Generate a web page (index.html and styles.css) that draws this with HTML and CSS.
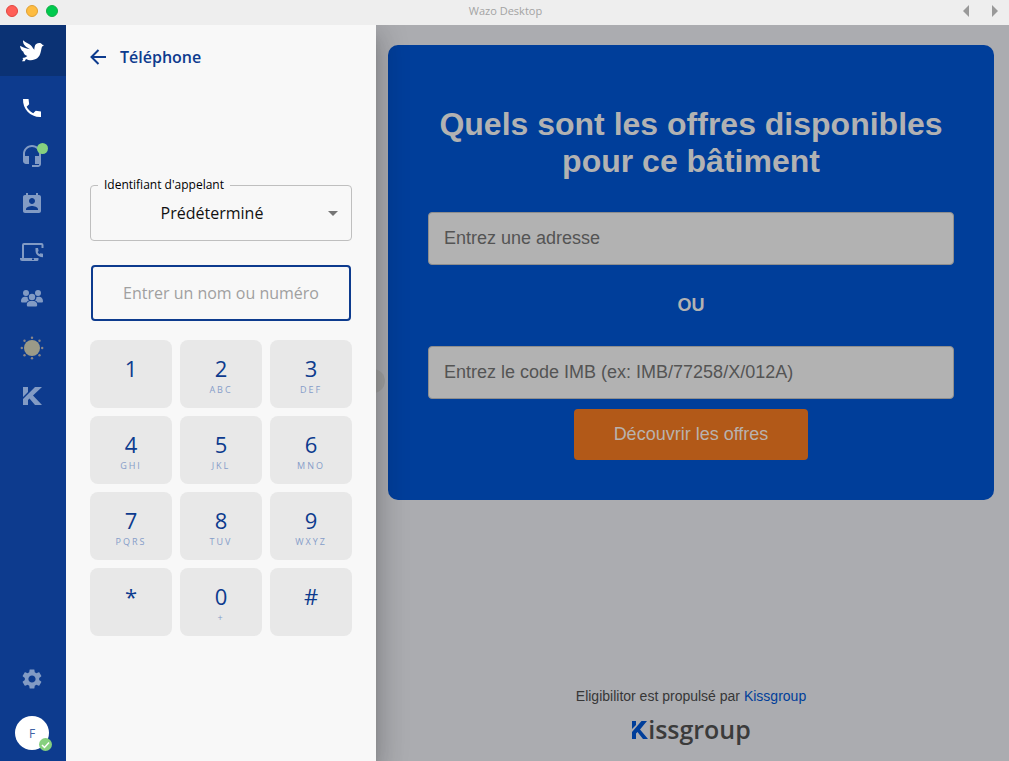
FILE: index.html
```html
<!DOCTYPE html>
<html lang="fr">
<head>
<meta charset="utf-8">
<meta name="viewport" content="width=device-width, initial-scale=1">
<title>Wazo Desktop</title>
<link rel="stylesheet" href="styles.css">
</head>
<body>
<div class="window">
  <header class="titlebar">
    <div class="lights">
      <button class="light light-close" aria-label="Fermer"></button>
      <button class="light light-min" aria-label="Réduire"></button>
      <button class="light light-max" aria-label="Agrandir"></button>
    </div>
    <div class="window-title">Wazo Desktop</div>
    <div class="history">
      <button class="history-btn" aria-label="Précédent"><svg width="8" height="14" viewBox="0 0 8 14"><path d="M7 1v12L1 7z" fill="#999"/></svg></button>
      <button class="history-btn" aria-label="Suivant"><svg width="8" height="14" viewBox="0 0 8 14"><path d="M1 1v12l6-6z" fill="#999"/></svg></button>
    </div>
  </header>
  <div class="body">
    <nav class="sidebar" aria-label="Navigation">
      <a class="brand" href="#" aria-label="Wazo">
        <svg width="24" height="22" viewBox="60 119 72 66" fill="#fff"><path d="M69 120C79 129 93 131 99 144L103 148C103 145 103 142 104 139C105 132 111 128 118 128C122 128 125 130 127 133L132 134L126 139C124 144 124 149 122 156C118 174 104 182 85 179L78 176L74 183L66 183L70 176L67 173C73 173 78 171 82 167C74 164 71 159 70 154C64 150 61 144 60 136C70 142 80 145 91 147C78 141 68 133 69 120Z"/></svg>
      </a>
      <div class="nav-list">
        <a class="nav-item active" href="#" aria-label="Téléphone"><svg width="24" height="24" viewBox="0 0 24 24"><path d="M21 15.460l-5.270-.610-2.520 2.520c-2.830-1.440-5.150-3.750-6.590-6.590l2.530-2.530L8.540 3H3.030C2.450 13.180 10.820 21.550 21 20.970v-5.510z"/></svg></a>
        <a class="nav-item" href="#" aria-label="Agent"><svg width="24" height="24" viewBox="0 0 24 24"><path d="M12 1c-4.97 0-9 4.03-9 9v7c0 1.66 1.34 3 3 3h3v-8H5v-2c0-3.87 3.13-7 7-7s7 3.13 7 7v2h-4v8h4v1h-7v2h6c1.66 0 3-1.34 3-3V10c0-4.970-4.030-9-9-9z"/></svg><span class="dot"></span></a>
        <a class="nav-item" href="#" aria-label="Contacts"><svg width="24" height="24" viewBox="0 0 24 24"><path d="M19 3h-1V1h-2v2H8V1H6v2H5c-1.110 0-2 .9-2 2v14c0 1.100.890 2 2 2h14c1.100 0 2-.9 2-2V5c0-1.100-.9-2-2-2zm-7 3c1.660 0 3 1.340 3 3s-1.340 3-3 3-3-1.340-3-3 1.340-3 3-3zm6 12H6v-1c0-2 4-3.100 6-3.100s6 1.100 6 3.100v1z"/></svg></a>
        <a class="nav-item" href="#" aria-label="Postes"><svg width="24" height="20" viewBox="0 0 24 20"><path d="M3 16V3Q3 2 4 2H21.500Q22.500 2 22.500 3V6" fill="none" stroke="#829bc4" stroke-width="2"/><path d="M0 16H18.500V17.500Q18.500 19 17 19H2Q0 19 0 17Z"/><path d="M15.500 6v2.500c0 4 3 6.700 7.500 6.700v-3.400l-2.500-.6-.9.9c-1-.5-1.500-1.200-1.900-2.200l.9-.9L18 6z"/><path d="M12 16.500h2v1.500h-2z" fill="#0d3b8e"/></svg></a>
        <a class="nav-item" href="#" aria-label="Groupes"><svg width="24" height="24" viewBox="0 0 24 24"><circle cx="6" cy="5" r="3"/><circle cx="18" cy="5" r="3"/><circle cx="12" cy="9" r="3.200"/><path d="M1 13.500C1 10 3 8.700 5.500 8.700L7.500 9Q7.500 11 9 12.500Q7 13 6.500 14.500H2Q1 14.500 1 13.500ZM23 13.500C23 10 21 8.700 18.500 8.700L16.500 9Q16.500 11 15 12.500Q17 13 17.500 14.500H22Q23 14.500 23 13.500ZM6.800 17C6.800 14 9 13 10.500 13H13.500C15 13 17.200 14 17.200 17Q17.200 18.500 16 18.500H8Q6.800 18.500 6.800 17Z"/></svg></a>
        <a class="nav-item" href="#" aria-label="Météo"><svg width="24" height="24" viewBox="0 0 24 24"><circle cx="12" cy="12" r="8" fill="#9b9a88"/><g fill="#8b8688"><circle cx="12" cy="1.800" r="1.200"/><circle cx="12" cy="22.200" r="1.200"/><circle cx="1.800" cy="12" r="1.200"/><circle cx="22.200" cy="12" r="1.200"/><circle cx="4.500" cy="4.800" r="1.200"/><circle cx="19.500" cy="4.800" r="1.200"/><circle cx="4.500" cy="19.200" r="1.200"/><circle cx="19.500" cy="19.200" r="1.200"/></g></svg></a>
        <a class="nav-item" href="#" aria-label="Kissgroup"><svg width="20" height="20" viewBox="0 0 20 20"><path d="M1 1H6V6L1 11ZM1 19V13L13 1H20L11 9.500L20 19H13L7.500 12.500L6 14V19Z"/></svg></a>
      </div>
      <a class="nav-item" href="#" aria-label="Paramètres"><svg width="24" height="24" viewBox="0 0 24 24"><path d="M19.140 12.940c.04-.3.060-.610.060-.940 0-.320-.020-.640-.070-.940l2.030-1.580c.180-.140.230-.410.120-.610l-1.920-3.320c-.120-.220-.370-.290-.590-.220l-2.390.960c-.5-.380-1.030-.7-1.620-.940l-.360-2.540c-.040-.240-.240-.410-.480-.410h-3.840c-.240 0-.430.170-.470.410l-.360 2.540c-.590.240-1.130.570-1.620.940l-2.390-.960c-.220-.080-.470 0-.590.220L2.740 8.870c-.120.210-.080.470.120.610l2.030 1.580c-.050.3-.090.630-.090.940s.020.640.070.940l-2.030 1.580c-.180.140-.230.410-.120.610l1.920 3.320c.120.220.370.290.590.220l2.390-.960c.5.380 1.030.7 1.620.940l.360 2.540c.050.240.240.410.480.410h3.840c.240 0 .440-.170.470-.410l.360-2.540c.590-.240 1.130-.560 1.620-.940l2.390.960c.220.080.470 0 .590-.220l1.920-3.320c.120-.220.070-.470-.120-.610l-2.010-1.580zM12 15.600c-1.980 0-3.600-1.620-3.600-3.600s1.620-3.600 3.600-3.600 3.600 1.620 3.600 3.600-1.620 3.600-3.600 3.600z"/></svg></a>
      <button class="avatar" aria-label="Profil">F<span class="status"><svg width="13" height="13" viewBox="0 0 13 13"><path d="M3 7l2.500 2.500L10 4.500" fill="none" stroke="#fff" stroke-width="1.500"/></svg></span></button>
    </nav>

    <section class="panel">
      <div class="panel-head">
        <button class="back" aria-label="Retour"><svg width="16" height="16" viewBox="0 0 16 16"><path d="M16 8H1.500M8.500 1L1.500 8l7 7" fill="none" stroke="#0d3b8e" stroke-width="2"/></svg></button>
        <h2 class="panel-title">Téléphone</h2>
      </div>
      <fieldset class="caller">
        <legend class="caller-legend"><label for="caller">Identifiant d'appelant</label></legend>
        <select class="caller-select" id="caller"><option>Prédéterminé</option></select>
        <svg class="caret" width="10" height="5" viewBox="0 0 10 5"><path d="M0 0h10L5 5z" fill="#757575"/></svg>
      </fieldset>
      <input class="number" type="text" aria-label="Entrer un nom ou numéro" placeholder="Entrer un nom ou numéro">
      <div class="keypad">
        <button class="key"><span class="digit">1</span></button>
        <button class="key"><span class="digit">2</span><span class="letters">ABC</span></button>
        <button class="key"><span class="digit">3</span><span class="letters">DEF</span></button>
        <button class="key"><span class="digit">4</span><span class="letters">GHI</span></button>
        <button class="key"><span class="digit">5</span><span class="letters">JKL</span></button>
        <button class="key"><span class="digit">6</span><span class="letters">MNO</span></button>
        <button class="key"><span class="digit">7</span><span class="letters">PQRS</span></button>
        <button class="key"><span class="digit">8</span><span class="letters">TUV</span></button>
        <button class="key"><span class="digit">9</span><span class="letters">WXYZ</span></button>
        <button class="key"><span class="digit">*</span></button>
        <button class="key"><span class="digit">0</span><span class="letters">+</span></button>
        <button class="key"><span class="digit">#</span></button>
      </div>
    </section>

    <main class="content">
      <span class="handle"></span>
      <form class="card">
        <h1 class="card-title">Quels sont les offres disponibles pour ce bâtiment</h1>
        <input class="field" type="text" aria-label="Entrez une adresse" placeholder="Entrez une adresse">
        <p class="or">OU</p>
        <input class="field" type="text" aria-label="Entrez le code IMB" placeholder="Entrez le code IMB (ex: IMB/77258/X/012A)">
        <button class="submit" type="button">Découvrir les offres</button>
      </form>
      <footer class="footer">
        <p class="powered">Eligibilitor est propulsé par <a class="link" href="#">Kissgroup</a></p>
        <div class="logo" role="img" aria-label="Kissgroup"><svg width="17" height="19" viewBox="0 0 17 19"><path d="M1 1H5V5L1 9ZM1 19V12L10.500 1H16L9 9.500L17 19H12L6.500 12L5 13.500V19Z" fill="#003e9a"/></svg><span>issgroup</span></div>
      </footer>
    </main>
  </div>
</div>
</body>
</html>
```
FILE: styles.css
```css
* { box-sizing: border-box; }

body {
  margin: 0;
  font-family: "Open Sans", "Noto Sans", sans-serif;
}

button {
  border: 0;
  padding: 0;
  background: none;
  font: inherit;
  color: inherit;
}

.window {
  display: flex;
  flex-direction: column;
  min-height: 100vh;
}

.titlebar {
  position: relative;
  z-index: 3;
  display: grid;
  grid-template-columns: 1fr auto 1fr;
  align-items: center;
  height: 25px;
  padding: 0 10px 3px 6px;
  background: #eeeeee;
}

.lights { display: flex; gap: 8px; }

.light {
  width: 12px;
  height: 12px;
  border: 1px solid;
  border-radius: 50%;
}

.light-close { background: #ff5f57; border-color: #e2463f; }
.light-min { background: #febc40; border-color: #e0a033; }
.light-max { background: #00ca4e; border-color: #14ae46; }

.window-title {
  padding-left: 6px;
  font-size: 11px;
  line-height: 16px;
  color: #a3a3a3;
}

.history {
  display: flex;
  justify-content: flex-end;
  gap: 21px;
}

.history-btn { display: flex; }

.body { display: flex; flex: 1; }

.sidebar {
  position: relative;
  z-index: 2;
  display: flex;
  flex-direction: column;
  align-items: center;
  flex: none;
  width: 66px;
  padding-bottom: 11px;
  background: #0d3b8e;
}

.brand {
  display: flex;
  align-items: center;
  justify-content: center;
  align-self: stretch;
  height: 51px;
  padding-right: 2px;
  background: #0b3274;
}

.nav-list { flex: 1; padding-top: 8px; }

.nav-item {
  position: relative;
  display: flex;
  align-items: center;
  justify-content: center;
  width: 66px;
  height: 48px;
  padding-right: 2px;
  fill: #829bc4;
}

.active { fill: #ffffff; }

.dot {
  position: absolute;
  top: 11px;
  right: 18px;
  width: 11px;
  height: 11px;
  border-radius: 50%;
  background: #86d07f;
}

.avatar {
  position: relative;
  width: 34px;
  height: 34px;
  margin: 13px 2px 0 0;
  border-radius: 50%;
  background: #ffffff;
  font-size: 12px;
  color: #3f62a5;
}

.status {
  position: absolute;
  right: -3px;
  bottom: -1px;
  display: flex;
  border-radius: 50%;
  background: #86d07f;
}

.panel {
  position: relative;
  z-index: 1;
  flex: none;
  width: 310px;
  padding: 20px 24px;
  background: #f8f8f8;
  box-shadow: 0 8px 10px -5px rgba(0, 0, 0, .2), 0 16px 24px 2px rgba(0, 0, 0, .14), 0 6px 30px 5px rgba(0, 0, 0, .12);
}

.panel-head {
  display: flex;
  align-items: center;
  gap: 14px;
  height: 24px;
}

.back { display: flex; }

.panel-title {
  margin: 0;
  font-size: 16px;
  line-height: 24px;
  font-weight: 600;
  color: #0d3b8e;
}

.caller {
  position: relative;
  margin: 108px 0 24px;
  padding: 0;
  border: 1px solid #bfbfbf;
  border-radius: 4px;
}

.caller-legend {
  margin-left: 7px;
  padding: 0 6px;
  font-size: 12px;
  line-height: 16px;
}

.caller-select {
  display: block;
  width: 100%;
  height: 47px;
  padding: 0 18px 8px 0;
  border: 0;
  background: transparent;
  appearance: none;
  font: 16px "Open Sans", "Noto Sans", sans-serif;
  color: #111111;
  text-align: center;
  text-align-last: center;
}

.caret {
  position: absolute;
  top: 18px;
  right: 13px;
  pointer-events: none;
}

.number {
  display: block;
  width: calc(100% - 2px);
  height: 56px;
  margin: 0 1px 19px;
  border: 2px solid #0d3b8e;
  border-radius: 4px;
  background: transparent;
  font: 16px "Open Sans", "Noto Sans", sans-serif;
  text-align: center;
}

.number::placeholder { color: #a0a0a0; }

.keypad {
  display: grid;
  grid-template-columns: repeat(3, 1fr);
  gap: 8px;
}

.key {
  display: flex;
  flex-direction: column;
  align-items: center;
  height: 68px;
  padding-top: 14px;
  border-radius: 8px;
  background: #e8e8e8;
}

.digit {
  font-size: 22px;
  line-height: 28px;
  color: #0d3b8e;
}

.letters {
  padding-top: 1px;
  font-size: 9px;
  line-height: 14px;
  letter-spacing: 2px;
  color: #869dc9;
}

.content {
  position: relative;
  display: flex;
  flex-direction: column;
  justify-content: space-between;
  flex: 1;
  min-width: 0;
  padding: 20px 15px 14px 12px;
  background: #abacb0;
  font-family: "Liberation Sans", sans-serif;
}

.handle {
  position: absolute;
  top: 344px;
  left: -15px;
  width: 24px;
  height: 24px;
  border-radius: 50%;
  background: #a0a0a0;
}

.card {
  display: flex;
  flex-direction: column;
  padding: 61px 40px 40px;
  border-radius: 10px;
  background: #003e9a;
}

.card-title {
  margin: 0 0 32px;
  font-size: 32px;
  line-height: 37px;
  text-align: center;
  color: #b2b2b2;
}

.field {
  width: 100%;
  height: 53px;
  padding: 0 15px;
  border: 1px solid #8e8e8e;
  border-radius: 4px;
  background: #b2b2b2;
  font: 18px "Liberation Sans", sans-serif;
}

.field::placeholder { color: #545454; }

.or {
  margin: 30px 0;
  font-size: 18px;
  line-height: 21px;
  font-weight: bold;
  text-align: center;
  color: #b2b2b2;
}

.submit {
  align-self: center;
  height: 51px;
  margin-top: 10px;
  padding: 0 40px;
  border-radius: 4px;
  background: #b25918;
  font-size: 18px;
  color: #b9b2ae;
}

.footer {
  display: flex;
  flex-direction: column;
  align-items: center;
  gap: 7px;
}

.powered {
  margin: 0;
  font-size: 14px;
  line-height: 16px;
  color: #373737;
}

.link { color: #003e9a; text-decoration: none; }

.logo {
  display: flex;
  align-items: center;
  font: 600 25px/36px "Open Sans", sans-serif;
  color: #3b3b3b;
}
```
